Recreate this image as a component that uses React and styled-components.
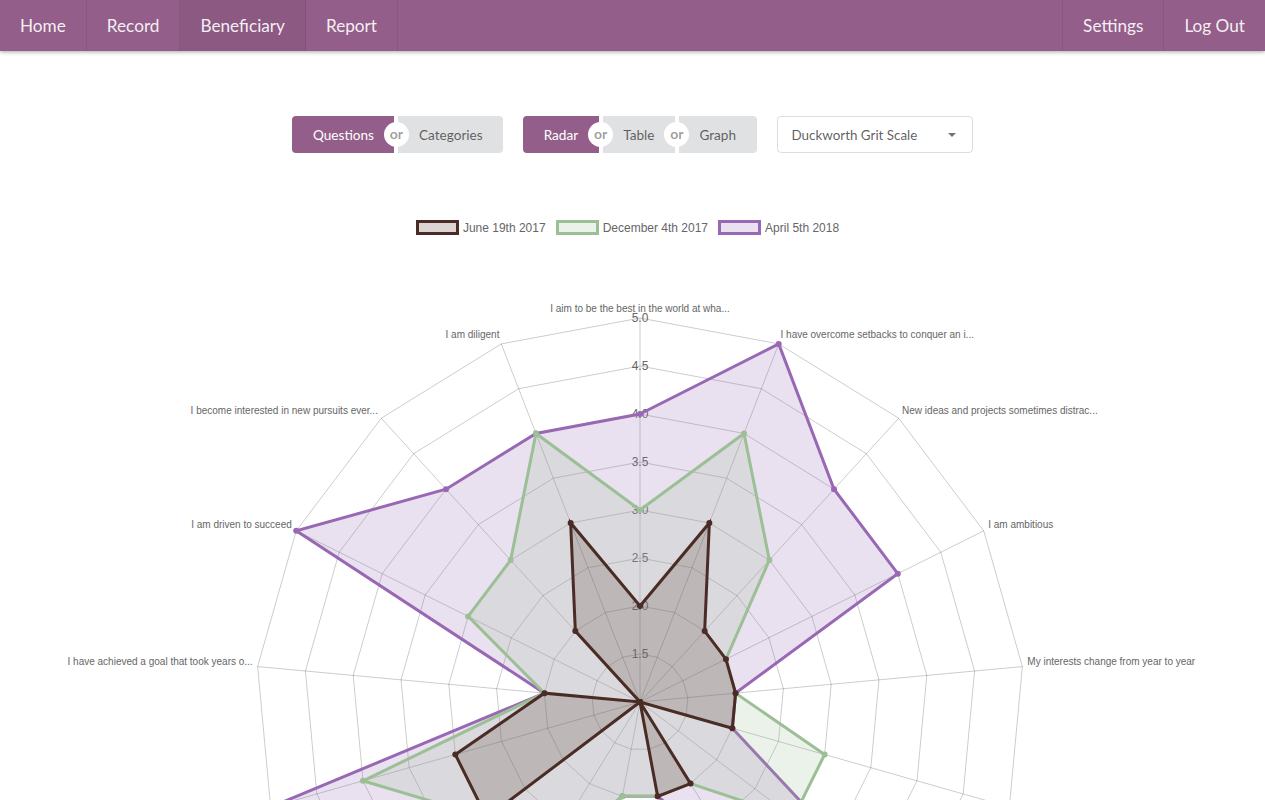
import React from 'react';
import styled, { createGlobalStyle } from 'styled-components';

const purple = '#945e8a';

const GlobalStyle = createGlobalStyle`
    html, body {
        margin: 0;
        padding: 0;
        background: #fff;
        overflow: hidden;
    }

    body {
        font-family: Lato, 'Open Sans', sans-serif;
    }
`;

const Nav = styled.nav`
    display: flex;
    height: 51px;
    background: ${purple};
    box-shadow: 0 1px 4px rgba(0, 0, 0, 0.35);
    position: relative;
    z-index: 2;
`;

const NavItem = styled.a`
    display: flex;
    align-items: center;
    padding: 0 20px;
    font-size: 17.2px;
    color: rgba(255, 255, 255, 0.92);
    border-right: 1px solid rgba(34, 36, 38, 0.1);
    background: ${p => p.$active ? 'rgba(0, 0, 0, 0.05)' : 'transparent'};
    cursor: pointer;
`;

const RightItem = styled(NavItem)`
    border-right: none;
    border-left: 1px solid rgba(34, 36, 38, 0.1);
`;

const Spacer = styled.div`
    flex: 1;
`;

const Controls = styled.div`
    display: flex;
    justify-content: center;
    gap: 20px;
    margin-top: 65px;
`;

const ButtonGroup = styled.div`
    display: flex;
`;

const ToggleButton = styled.button`
    height: 37px;
    padding: 0 20.5px;
    border: none;
    font-family: Lato, 'Open Sans', sans-serif;
    font-size: 13.6px;
    background: ${p => p.$active ? purple : '#e0e1e2'};
    color: ${p => p.$active ? '#fff' : 'rgba(0, 0, 0, 0.6)'};
    border-radius: 0;

    &:first-child {
        border-radius: 4px 0 0 4px;
    }

    &:last-child {
        border-radius: 0 4px 4px 0;
    }
`;

const Or = styled.div`
    width: 4px;
    position: relative;
    z-index: 3;

    &::before {
        content: 'or';
        position: absolute;
        top: 50%;
        left: 50%;
        width: 25px;
        height: 25px;
        margin: -12.5px 0 0 -12.5px;
        border-radius: 50%;
        background: #fff;
        color: rgba(0, 0, 0, 0.4);
        font-size: 14px;
        font-weight: 700;
        line-height: 24px;
        text-align: center;
    }
`;

const Select = styled.div`
    display: flex;
    align-items: center;
    justify-content: space-between;
    box-sizing: border-box;
    width: 196px;
    height: 37px;
    padding: 0 14px;
    border: 1px solid rgba(34, 36, 38, 0.15);
    border-radius: 4px;
    font-size: 13.4px;
    color: rgba(0, 0, 0, 0.65);
`;

const Caret = styled.span`
    width: 0;
    height: 0;
    border-left: 4px solid transparent;
    border-right: 4px solid transparent;
    border-top: 4px solid rgba(0, 0, 0, 0.55);
    margin-right: 2px;
`;

const Legend = styled.div`
    display: flex;
    justify-content: center;
    margin-top: 67px;
    height: 15px;
    font-family: 'Liberation Sans', Arial, sans-serif;
    font-size: 12px;
    color: #666;
`;

const LegendItem = styled.div`
    display: flex;
    align-items: center;
    margin-right: 10px;
`;

const Swatch = styled.span`
    box-sizing: border-box;
    width: 43px;
    height: 15px;
    margin-right: 4px;
    border: 3px solid ${p => p.$color};
    background: ${p => p.$fill};
`;

const ChartSvg = styled.svg`
    display: block;
    font-family: 'Liberation Sans', Arial, sans-serif;
`;

const labels = [
    'I aim to be the best in the world at wha...',
    'I have overcome setbacks to conquer an i...',
    'New ideas and projects sometimes distrac...',
    'I am ambitious',
    'My interests change from year to year',
    "Setbacks don't discourage me",
    'I have been obsessed with a certain idea...',
    'I am a hard worker',
    'I often set a goal but later choose to p...',
    'I have difficulty maintaining my focus o...',
    'I finish whatever I begin',
    'I am excited by new challenges',
    'I am not easily discouraged',
    'I have achieved a goal that took years o...',
    'I am driven to succeed',
    'I become interested in new pursuits ever...',
    'I am diligent',
];

const datasets = [
    { label: 'June 19th 2017', rgb: '75, 44, 37', data: [2, 3, 2, 2, 2, 2, 1, 2, 2, 1, 1, 3, 3, 2, 1, 2, 3] },
    { label: 'December 4th 2017', rgb: '156, 191, 150', data: [3, 4, 3, 2, 2, 3, 3, 2, 2, 2, 3, 3, 4, 2, 3, 3, 4] },
    { label: 'April 5th 2018', rgb: '152, 104, 180', data: [4, 5, 4, 4, 2, 2, 4, 3, 2, 2, 3, 4, 5, 2, 5, 4, 4] },
];

const N = labels.length;
const CX = 640;
const CY = 467;
const R = 384;
const MIN = 1;
const MAX = 5;
const ticks = [1.5, 2, 2.5, 3, 3.5, 4, 4.5, 5];

const angle = i => (i * 2 * Math.PI) / N;
const radius = v => ((v - MIN) / (MAX - MIN)) * R;
const pointAt = (i, r) => [CX + r * Math.sin(angle(i)), CY - r * Math.cos(angle(i))];
const toPoints = arr => arr.map(([x, y]) => `${x.toFixed(2)},${y.toFixed(2)}`).join(' ');

const RadarChart = () => {
    // chart draws the last dataset first, so the first one ends up on top
    const drawOrder = [...datasets].reverse();

    return (
        <ChartSvg width="1265" height="565" viewBox="0 0 1265 565">
            {ticks.map(t => (
                <polygon
                    key={t}
                    points={toPoints(labels.map((_, i) => pointAt(i, radius(t))))}
                    fill="none"
                    stroke="rgba(0,0,0,0.2)"
                    strokeWidth="1"
                />
            ))}
            {labels.map((_, i) => {
                const [x, y] = pointAt(i, R);
                return <line key={i} x1={CX} y1={CY} x2={x} y2={y} stroke="rgba(0,0,0,0.2)" strokeWidth="1" />;
            })}
            {ticks.map(t => (
                <text key={t} x={CX} y={CY - radius(t) + 4.3} fontSize="12" fill="#666" textAnchor="middle">
                    {t.toFixed(1)}
                </text>
            ))}
            {labels.map((text, i) => {
                const [x, y] = pointAt(i, R + 5);
                const s = Math.sin(angle(i));
                const c = Math.cos(angle(i));
                const anchor = Math.abs(s) < 0.001 ? 'middle' : s > 0 ? 'start' : 'end';
                const baseline = c > 0 ? y - 1 : y + 9;
                return (
                    <text key={i} x={x} y={baseline} fontSize="10" fill="#666" textAnchor={anchor}>
                        {text}
                    </text>
                );
            })}
            {drawOrder.map(ds => {
                const pts = ds.data.map((v, i) => pointAt(i, radius(v)));
                return (
                    <g key={ds.label}>
                        <polygon
                            points={toPoints(pts)}
                            fill={`rgba(${ds.rgb}, 0.2)`}
                            stroke={`rgb(${ds.rgb})`}
                            strokeWidth="3"
                            strokeLinejoin="miter"
                        />
                        {pts.map(([x, y], i) => (
                            <circle key={i} cx={x} cy={y} r="3" fill={`rgb(${ds.rgb})`} />
                        ))}
                    </g>
                );
            })}
        </ChartSvg>
    );
};

const App = () => {
    return (
        <>
            <GlobalStyle />
            <Nav>
                <NavItem>Home</NavItem>
                <NavItem>Record</NavItem>
                <NavItem $active>Beneficiary</NavItem>
                <NavItem>Report</NavItem>
                <Spacer />
                <RightItem>Settings</RightItem>
                <RightItem>Log Out</RightItem>
            </Nav>
            <Controls>
                <ButtonGroup>
                    <ToggleButton $active>Questions</ToggleButton>
                    <Or />
                    <ToggleButton>Categories</ToggleButton>
                </ButtonGroup>
                <ButtonGroup>
                    <ToggleButton $active>Radar</ToggleButton>
                    <Or />
                    <ToggleButton>Table</ToggleButton>
                    <Or />
                    <ToggleButton>Graph</ToggleButton>
                </ButtonGroup>
                <Select>
                    Duckworth Grit Scale
                    <Caret />
                </Select>
            </Controls>
            <Legend>
                {datasets.map(ds => (
                    <LegendItem key={ds.label}>
                        <Swatch $color={`rgb(${ds.rgb})`} $fill={`rgba(${ds.rgb}, 0.2)`} />
                        {ds.label}
                    </LegendItem>
                ))}
            </Legend>
            <RadarChart />
        </>
    );
};

export default App;
